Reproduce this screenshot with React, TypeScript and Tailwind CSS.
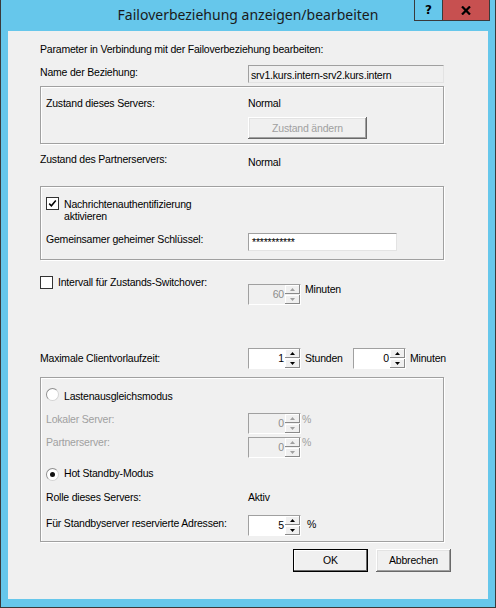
import type { ReactNode } from 'react';

function SpinButton({ up, disabled }: { up?: boolean; disabled?: boolean }) {
  return (
    <div className="flex h-[9px] w-[15px] items-center justify-center bg-[#f0f0f0] shadow-[inset_-1px_-1px_0_#8a8a8a,inset_1px_1px_0_#ffffff]">
      <svg width="5" height="3" viewBox="0 0 5 3">
        <path d={up ? 'M2.5 0L5 3H0z' : 'M0 0h5L2.5 3z'} fill={disabled ? '#a0a0a0' : '#000000'} />
      </svg>
    </div>
  );
}

function Spinner({ value, disabled, className = '' }: { value: string; disabled?: boolean; className?: string }) {
  return (
    <div
      className={`flex h-[21px] w-[53px] shrink-0 border border-t-[#a0a0a0] border-l-[#a0a0a0] border-r-[#ffffff] border-b-[#ffffff] ${
        disabled ? 'bg-[#f0f0f0] text-[#8d8d8d]' : 'bg-white text-black'
      } ${className}`}
    >
      <div className="flex-1 pr-[1px] pt-[3px] text-right">{value}</div>
      <div className="flex flex-col gap-[1px]">
        <SpinButton up disabled={disabled} />
        <SpinButton disabled={disabled} />
      </div>
    </div>
  );
}

function Checkbox({ checked }: { checked?: boolean }) {
  return (
    <div className="flex h-[13px] w-[13px] shrink-0 items-center justify-center border border-[#333333] bg-white">
      {checked && (
        <svg width="9" height="9" viewBox="0 0 9 9">
          <path d="M1.2 4.6L3.4 6.8L7.8 1.6" stroke="#000" strokeWidth="1.5" fill="none" />
        </svg>
      )}
    </div>
  );
}

function Radio({ checked, className = '' }: { checked?: boolean; className?: string }) {
  return (
    <div
      className={`flex h-[13px] w-[13px] shrink-0 items-center justify-center rounded-full border border-[#8f8f8f] border-r-[#d4d4d4] border-b-[#d4d4d4] bg-white ${className}`}
    >
      {checked && <div className="h-[5px] w-[5px] rounded-full bg-[#111111]" />}
    </div>
  );
}

function Button({ children, primary, disabled, width, height = 'h-[23px]' }: { children: ReactNode; primary?: boolean; disabled?: boolean; width: string; height?: string }) {
  return (
    <div
      className={`flex ${height} ${width} items-center justify-center bg-[#f0f0f0] ${
        primary
          ? 'border border-black shadow-[inset_-1px_-1px_0_#696969,inset_1px_1px_0_#ffffff]'
          : 'shadow-[inset_-1px_-1px_0_#696969,inset_1px_1px_0_#ffffff,inset_-2px_-2px_0_#a0a0a0,inset_2px_2px_0_#e3e3e3]'
      } ${disabled ? 'text-[#a0a0a0]' : 'text-black'}`}
    >
      {children}
    </div>
  );
}

export default function App() {
  return (
    <div className="relative h-[608px] w-[496px] border-x border-b border-[#3a3a3a] bg-[#66c7eb]">
      {/* Title bar */}
      <div className="flex h-[31px] justify-center pt-[5px] font-['Noto_Sans','Open_Sans',sans-serif] text-[14px] leading-[19px] text-[#1a1a1a]">
        Failoverbeziehung anzeigen/bearbeiten
      </div>
      <div className="absolute right-[5px] top-0 flex">
        <div className="flex h-[21px] w-[29px] items-center justify-center border border-t-0 border-[#3a3a3a] font-['DejaVu_Sans',sans-serif] text-[12px] font-bold leading-none text-black">
          ?
        </div>
        <div className="flex h-[21px] w-[47px] items-center justify-center border-r border-b border-[#3a3a3a] bg-[#c75050]">
          <svg width="10" height="9" viewBox="0 0 10 9">
            <path d="M1 0.5L9 8.5M9 0.5L1 8.5" stroke="#000" strokeWidth="2.2" />
          </svg>
        </div>
      </div>

      {/* Client area */}
      <div className="ml-[7px] h-[568px] w-[480px] bg-[#f0f0f0] pl-[32px] pt-[12px] font-['Liberation_Sans',Arial,sans-serif] text-[10.5px] leading-[13px] tracking-[-0.2px] text-black">
        <p>Parameter in Verbindung mit der Failoverbeziehung bearbeiten:</p>

        <div className="mt-[9px] flex">
          <span className="mt-[1px] w-[208px]">Name der Beziehung:</span>
          <div className="h-[18px] w-[196px] border border-t-[#a0a0a0] border-l-[#a0a0a0] border-r-[#e3e3e3] border-b-[#e3e3e3] bg-[#f0f0f0] pl-[2px] pt-[3px]">
            srv1.kurs.intern-srv2.kurs.intern
          </div>
        </div>

        {/* Zustand group */}
        <div className="mt-[3px] h-[58px] w-[404px] border border-[#a0a0a0] pl-[5px] pt-[10px] shadow-[inset_1px_1px_0_#ffffff,1px_1px_0_#ffffff]">
          <div className="flex">
            <span className="w-[202px]">Zustand dieses Servers:</span>
            <span>Normal</span>
          </div>
          <div className="ml-[202px] mt-[7px]">
            <Button disabled width="w-[119px]" height="h-[22px]">
              Zustand ändern
            </Button>
          </div>
        </div>

        <div className="mt-[9px] flex">
          <span className="w-[208px]">Zustand des Partnerservers:</span>
          <span className="mt-[3px]">Normal</span>
        </div>

        {/* Authentication group */}
        <div className="mt-[17px] h-[74px] w-[404px] border border-[#a0a0a0] pl-[5px] pt-[10px] shadow-[inset_1px_1px_0_#ffffff,1px_1px_0_#ffffff]">
          <div className="flex items-start">
            <Checkbox checked />
            <span className="ml-[5px] mt-[1px] leading-[12px]">
              Nachrichtenauthentifizierung
              <br />
              aktivieren
            </span>
          </div>
          <div className="mt-[11px] flex">
            <span className="w-[202px]">Gemeinsamer geheimer Schlüssel:</span>
            <div className="h-[18px] w-[149px] border border-t-[#a0a0a0] border-l-[#a0a0a0] border-r-[#e3e3e3] border-b-[#e3e3e3] bg-white pl-[3px] pt-[2px]">
              ***********
            </div>
          </div>
        </div>

        <div className="mt-[16px] flex items-start">
          <div className="flex w-[208px] items-start">
            <Checkbox />
            <span className="ml-[5px]">Intervall für Zustands-Switchover:</span>
          </div>
          <Spinner value="60" disabled className="mt-[8px]" />
          <span className="ml-[4px] mt-[7px]">Minuten</span>
        </div>

        <div className="mt-[43px] flex items-start">
          <span className="mt-[4px] w-[208px]">Maximale Clientvorlaufzeit:</span>
          <Spinner value="1" />
          <span className="mt-[4px] w-[52px] pl-[4px]">Stunden</span>
          <Spinner value="0" />
          <span className="ml-[4px] mt-[4px]">Minuten</span>
        </div>

        {/* Mode group */}
        <div className="mt-[8px] h-[165px] w-[404px] border border-[#a0a0a0] pl-[5px] shadow-[inset_1px_1px_0_#ffffff,1px_1px_0_#ffffff]">
          <div className="mt-[10px] flex items-start">
            <Radio />
            <span className="ml-[5px] mt-[2px]">Lastenausgleichsmodus</span>
          </div>
          <div className="mt-[10px] flex items-start">
            <span className="w-[202px] text-[#a0a0a0]">Lokaler Server:</span>
            <Spinner value="0" disabled />
            <span className="ml-[1px] text-[#a0a0a0]">%</span>
          </div>
          <div className="mt-[2px] flex items-start">
            <span className="w-[202px] text-[#a0a0a0]">Partnerserver:</span>
            <Spinner value="0" disabled className="mt-[1px]" />
            <span className="ml-[1px] text-[#a0a0a0]">%</span>
          </div>
          <div className="mt-[9px] flex items-start">
            <Radio checked className="mt-[1px]" />
            <span className="ml-[5px]">Hot Standby-Modus</span>
          </div>
          <div className="mt-[10px] flex">
            <span className="w-[202px]">Rolle dieses Servers:</span>
            <span>Aktiv</span>
          </div>
          <div className="mt-[11px] flex items-start">
            <span className="mt-[2px] w-[202px]">Für Standbyserver reservierte Adressen:</span>
            <Spinner value="5" />
            <span className="ml-[6px] mt-[3px]">%</span>
          </div>
        </div>

        <div className="ml-[253px] mt-[7px] flex gap-[8px]">
          <Button primary width="w-[75px]">
            OK
          </Button>
          <Button width="w-[75px]">Abbrechen</Button>
        </div>
      </div>
    </div>
  );
}
